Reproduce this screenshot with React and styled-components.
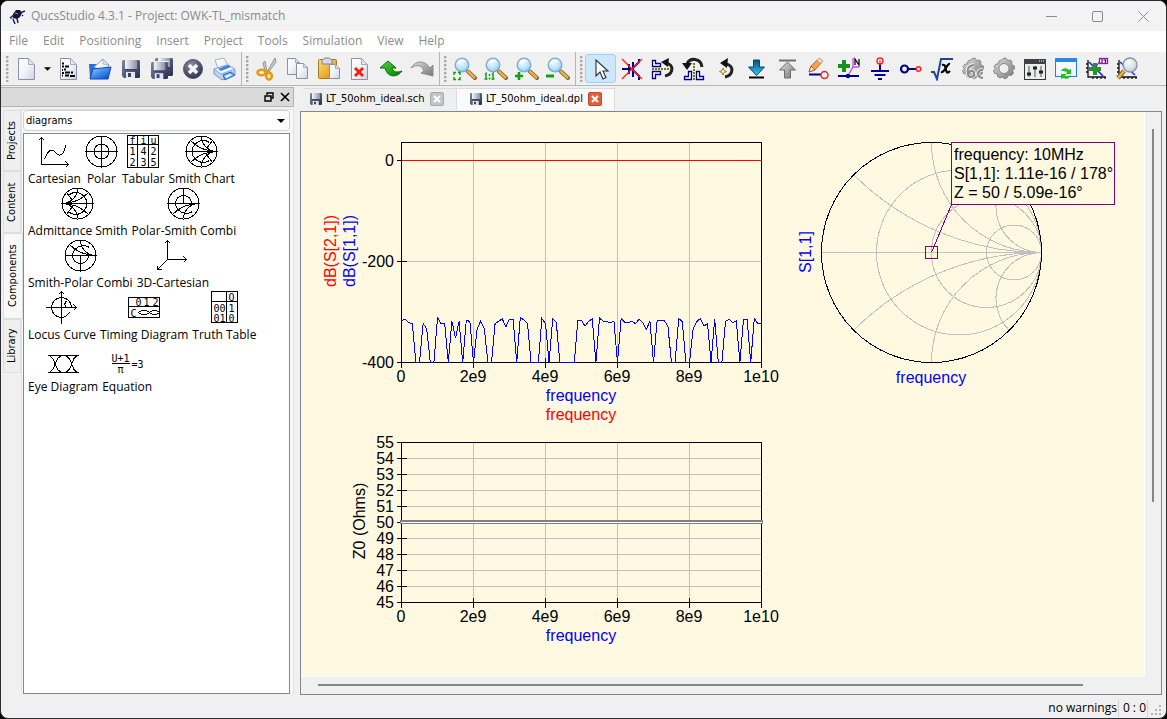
import React from "react";
import styled, { createGlobalStyle, css } from "styled-components";

const UI = `"Open Sans", "Noto Sans", sans-serif`;
const SMALL_UI = `"DejaVu Sans Condensed", "DejaVu Sans", sans-serif`;
const PLOT = `"Liberation Sans", Arial, sans-serif`;

const Global = createGlobalStyle`
  * { box-sizing: border-box; }
  html, body { margin: 0; height: 100%; background: #000; }
  body { font: 12px/16px ${UI}; color: #000; }
  #root { height: 100%; }
  button { font: inherit; color: inherit; background: none; border: 0; padding: 0; margin: 0; }
  svg { display: block; flex: none; }
`;

/* ---------- window shell ---------- */

const Window = styled.div`
  display: flex;
  flex-direction: column;
  height: 100vh;
  background: #f0f0f0;
  border: 1px solid #2b2b33;
  border-radius: 8px;
  overflow: hidden;
`;

const TitleBar = styled.header`
  display: flex;
  align-items: center;
  height: 30px;
  flex: none;
  padding-left: 8px;
  background: #f3f3f3;
  color: #8a8a8a;
`;

const Title = styled.h1`
  flex: 1;
  margin: 0 0 0 5px;
  font-size: 12px;
  font-weight: 400;
`;

const WindowButton = styled.button`
  display: grid;
  place-items: center;
  width: 46px;
  height: 30px;
`;

const MenuBar = styled.nav`
  display: flex;
  flex: none;
  height: 21px;
  background: #fff;
  color: #8c8c8c;
`;

const MenuItem = styled.button`
  height: 19px;
  padding: 0 7px 0 8px;
`;

const ToolBar = styled.div`
  display: flex;
  flex: none;
  height: 34px;
  padding-left: 1px;
  border-bottom: 1px solid #b6b6b6;
`;

const ToolGroup = styled.div`
  display: flex;
  align-items: center;
  padding-right: 2px;
  border-right: 1px solid ${(p) => (p.$last ? "transparent" : "#b6b6b6")};
`;

const Grip = styled.span`
  width: 9px;
  height: 26px;
  background: radial-gradient(circle at 1px 1px, #a8a8a8 1px, transparent 2px) 4px 0 / 5px 4px repeat-y;
`;

const ToolButton = styled.button`
  display: grid;
  place-items: center;
  width: ${(p) => (p.$narrow ? "11px" : "31px")};
  height: 29px;
  border: 1px solid transparent;
  border-radius: 3px;
  ${(p) =>
    p.$active &&
    css`
      background: #cce8ff;
      border-color: #99d1ff;
    `}
`;

const Body = styled.div`
  display: flex;
  flex: 1;
  min-height: 0;
`;

/* ---------- left dock ---------- */

const Dock = styled.aside`
  display: flex;
  flex-direction: column;
  flex: none;
  width: 293px;
`;

const DockTitle = styled.div`
  display: flex;
  justify-content: flex-end;
  align-items: center;
  gap: 6px;
  height: 20px;
  margin-top: 1px;
  padding-right: 3px;
  background: #dadada;
  border: 1px solid #b4b4b4;
  border-left: 0;
`;

const DockBody = styled.div`
  display: flex;
  flex: 1;
  min-height: 0;
  padding: 2px 0 1px 2px;
`;

const SideTabs = styled.div`
  display: flex;
  flex-direction: column;
  width: 18px;
  padding-top: 1px;
`;

const SideTab = styled.button`
  writing-mode: vertical-rl;
  transform: rotate(180deg);
  height: ${(p) => p.$height}px;
  width: ${(p) => (p.$selected ? "20px" : "18px")};
  padding: 0;
  font: 11px/16px ${SMALL_UI};
  text-align: center;
  background: ${(p) => (p.$selected ? "#f8f8f8" : "#efefef")};
  border: 1px solid #dedede;
`;

const SidePane = styled.div`
  display: flex;
  flex-direction: column;
  flex: 1;
  gap: 2px;
  padding: 0 3px 0 1px;
  border: 1px solid #e2e2e2;
  border-bottom: 0;
  background: #f8f8f8;
`;

const ComboBox = styled.label`
  display: flex;
  align-items: center;
  height: 21px;
  padding-right: 4px;
  background: #fff;
  border: 1px solid #cfcfcf;
  border-radius: 4px;
`;

const Combo = styled.select`
  flex: 1;
  appearance: none;
  border: 0;
  outline: 0;
  padding: 0 2px;
  background: transparent;
  font: 11px/16px ${SMALL_UI};
  color: #000;
`;

const Palette = styled.div`
  display: flex;
  flex-wrap: wrap;
  align-content: flex-start;
  column-gap: 4px;
  flex: 1;
  padding: 1px 12px 0 4px;
  background: #fff;
  border: 1px solid #828790;
`;

const PaletteItem = styled.button`
  display: flex;
  flex-direction: column;
  align-items: center;
  gap: 3px;
  height: 52px;
  min-width: 33px;
  white-space: nowrap;
`;

/* ---------- documents ---------- */

const Documents = styled.main`
  display: flex;
  flex-direction: column;
  flex: 1;
  min-width: 0;
  margin: 2px 4px 0 6px;
`;

const DocTabs = styled.div`
  display: flex;
  height: 22px;
  flex: none;
  padding-left: 3px;
`;

const DocTab = styled.div`
  display: flex;
  align-items: center;
  width: ${(p) => (p.$selected ? "158px" : "154px")};
  padding: 0 12px 2px ${(p) => (p.$selected ? "13px" : "7px")};
  background: ${(p) => (p.$selected ? "#fafafa" : "#efefef")};
  border: solid #dcdcdc;
  border-width: 1px 1px 0 0;
`;

const DocTabLabel = styled.button`
  display: flex;
  align-items: center;
  gap: 4px;
  flex: 1;
  font: 11px/16px ${SMALL_UI};
  white-space: nowrap;
`;

const CloseTab = styled.button`
  display: grid;
  place-items: center;
  flex: none;
  width: 14px;
  height: 14px;
  border-radius: 2px;
  background: ${(p) => (p.$hot ? "#e0603c" : "#c4c4c4")};
  border: 1px solid ${(p) => (p.$hot ? "#c8482c" : "#a8a8a8")};
`;

const ViewFrame = styled.div`
  display: grid;
  grid-template: minmax(0, 1fr) 17px / minmax(0, 1fr) 16px;
  flex: 1;
  min-height: 0;
  margin-top: 1px;
  border: 1px solid #828790;
`;

const Canvas = styled.section`
  position: relative;
  overflow: hidden;
  background: #fff9e1;
  border: solid #fff;
  border-width: 0 1px 1px 0;
`;

const VTrack = styled.div`
  display: flex;
  flex-direction: column;
  align-items: center;
  padding: 17px 1px 0 0;
`;

const HTrack = styled.div`
  display: flex;
  align-items: center;
  padding: 0 0 2px 17px;
`;

const Thumb = styled.span`
  background: #868686;
  ${(p) => (p.$vertical ? "width: 2px; height: 68%;" : "height: 2px; width: 92.5%;")}
`;

const StatusBar = styled.footer`
  display: flex;
  flex: none;
  justify-content: flex-end;
  align-items: center;
  height: 23px;
  padding: 4px 2px 0 0;
`;

const StatusCell = styled.span`
  padding: 0 1px 1px 4px;
  border-right: 1px solid #d4d4d4;
`;

/* ---------- diagrams on the canvas ---------- */

const Diagram = styled.svg`
  position: absolute;
  left: ${(p) => p.$x}px;
  top: ${(p) => p.$y}px;
  overflow: visible;
  font: 16px ${PLOT};
`;

const MarkerNote = styled.div`
  position: absolute;
  left: ${(p) => p.$x}px;
  top: ${(p) => p.$y}px;
  padding: 2px 1px 2px 2px;
  border: 1px solid #800080;
  background: #fff9e1;
  font: 16px/19px ${PLOT};
  white-space: nowrap;
`;

const X_LABELS = ["0", "2e9", "4e9", "6e9", "8e9", "1e10"];

function Turned({ x, y, fill, children }) {
  return (
    <text transform={`translate(${x} ${y}) rotate(-90)`} textAnchor="middle" fill={fill}>
      {children}
    </text>
  );
}

/* Rectangular plot, 360 wide; its origin is the top left corner of the frame. */
function Cartesian({ x, y, height, ticks, children }) {
  return (
    <Diagram $x={x} $y={y} width="361" height={height + 1}>
      <g transform="translate(.5 .5)" fill="none" shapeRendering="crispEdges">
        {[72, 144, 216, 288].map((gx) => (
          <path key={gx} d={`M${gx} 0V${height}`} stroke="#c0c0c0" />
        ))}
        {ticks.map(([, ty]) => (
          <path key={ty} d={`M0 ${ty}H360`} stroke="#c0c0c0" />
        ))}
        <rect width="360" height={height} stroke="#000" />
        {ticks.map(([, ty]) => (
          <path key={ty} d={`M-5 ${ty}H${ty % height ? 5 : 0}`} stroke="#000" />
        ))}
        {X_LABELS.map((l, i) => (
          <path key={l} d={`M${i * 72} ${height - (i % 5 ? 5 : 0)}v${i % 5 ? 10 : 5}`} stroke="#000" />
        ))}
      </g>
      {ticks.map(([label, ty]) => (
        <text key={label} x="-7" y={ty + 6} textAnchor="end">{label}</text>
      ))}
      {X_LABELS.map((l, i) => (
        <text key={l} x={i * 72} y={height + 20} textAnchor="middle">{l}</text>
      ))}
      {children}
    </Diagram>
  );
}

/* Level of S[1,1] above -400 dB for every 100 MHz. */
const S11 = [
  83, 86, 79, 77, 0, 0, 77, 67, 0, 0, 89, 77, 77, 0, 82, 48, 82, 0, 84, 81, 0, 67, 82, 67, 0, 0,
  77, 82, 86, 71, 86, 86, 0, 89, 84, 77, 0, 0, 0, 87, 77, 0, 87, 79, 0, 0, 0, 0, 0, 84, 83, 72,
  82, 86, 0, 88, 82, 81, 79, 82, 0, 87, 80, 79, 82, 77, 86, 79, 65, 82, 0, 83, 83, 83, 72, 0, 0,
  87, 81, 0, 0, 67, 81, 87, 72, 77, 0, 86, 0, 0, 81, 86, 79, 82, 0, 86, 86, 0, 87, 77, 77,
];

function SParameterPlot() {
  const points = S11.map((v, i) => `${i * 3.6},${220 - v * 0.505}`).join(" ");
  return (
    <Cartesian x={100} y={30} height={220} ticks={[["0", 18], ["-200", 119], ["-400", 220]]}>
      <g transform="translate(.5 .5)" fill="none" shapeRendering="crispEdges">
        <path d="M0 18H360" stroke="#f00" />
        <polyline points={points} stroke="#00f" />
      </g>
      <Turned x={-65} y={109} fill="#f00">dB(S[2,1])</Turned>
      <Turned x={-46} y={109} fill="#00f">dB(S[1,1])</Turned>
      <text x="180" y="259" textAnchor="middle" fill="#00f">frequency</text>
      <text x="180" y="278" textAnchor="middle" fill="#f00">frequency</text>
    </Cartesian>
  );
}

function ImpedancePlot() {
  const ticks = Array.from({ length: 11 }, (_, i) => [String(55 - i), i * 16]);
  return (
    <Cartesian x={100} y={330} height={160} ticks={ticks}>
      <g shapeRendering="crispEdges">
        <rect x="-1" y="78" width="363" height="4" fill="#808080" />
        <rect x="0" y="80" width="361" height="1" fill="#fff" />
      </g>
      <Turned x={-36} y={79}>Z0 (Ohms)</Turned>
      <text x="180" y="199" textAnchor="middle" fill="#00f">frequency</text>
    </Cartesian>
  );
}

function SmithPlot() {
  return (
    <Diagram $x={520} $y={30} width="221" height="221">
      <g transform="translate(.5 .5)" fill="none" stroke="#c0c0c0" shapeRendering="crispEdges">
        <path d="M0 110H220" />
        <circle cx="137.5" cy="110" r="82.5" />
        <circle cx="165" cy="110" r="55" />
        <circle cx="192.5" cy="110" r="27.5" />
        <path d="M220 110A265.6 265.6 0 0 1 32.2 32.2M220 110A265.6 265.6 0 0 0 32.2 187.8" />
        <path d="M220 110A110 110 0 0 1 110 0M220 110A110 110 0 0 0 110 220" />
        <path d="M220 110A45.6 45.6 0 0 1 187.8 32.2M220 110A45.6 45.6 0 0 0 187.8 187.8" />
        <circle cx="110" cy="110" r="110" stroke="#000" />
        <path d="M104 104h12v12h-12zM110 110L130 62" stroke="#800080" />
      </g>
      <Turned x={-10} y={110} fill="#00f">S[1,1]</Turned>
      <text x="110" y="241" textAnchor="middle" fill="#00f">frequency</text>
    </Diagram>
  );
}

/* ---------- toolbar icons, 24 x 24 ---------- */

const DefsSvg = styled.svg`
  position: absolute;
`;

const Defs = () => (
  <DefsSvg width="0" height="0" aria-hidden="true">
    <defs>
      <linearGradient id="paper" x1="0" y1="0" x2="1" y2="1">
        <stop offset="0" stopColor="#fff" /><stop offset=".5" stopColor="#f2f3f8" /><stop offset="1" stopColor="#cdd1e2" />
      </linearGradient>
      <linearGradient id="steel" x1="0" y1="0" x2="1" y2="1">
        <stop offset="0" stopColor="#7f88a2" /><stop offset=".6" stopColor="#4a5272" /><stop offset="1" stopColor="#272d4a" />
      </linearGradient>
      <linearGradient id="shutter" x1="0" y1="0" x2="1" y2="0">
        <stop offset="0" stopColor="#f4f6fa" /><stop offset="1" stopColor="#8b93a8" />
      </linearGradient>
      <linearGradient id="blue" x1="0" y1="0" x2="1" y2="1">
        <stop offset="0" stopColor="#9fd2ff" /><stop offset=".5" stopColor="#3b8cf0" /><stop offset="1" stopColor="#0b3fb8" />
      </linearGradient>
      <linearGradient id="cyan" x1="0" y1="0" x2="0" y2="1">
        <stop offset="0" stopColor="#064a86" /><stop offset="1" stopColor="#38c8f4" />
      </linearGradient>
      <radialGradient id="lens" cx=".4" cy=".3" r=".8">
        <stop offset="0" stopColor="#f4fdff" /><stop offset=".6" stopColor="#b4e3fa" /><stop offset="1" stopColor="#7cbce8" />
      </radialGradient>
      <radialGradient id="greyLens" cx=".4" cy=".3" r=".8">
        <stop offset="0" stopColor="#fff" /><stop offset="1" stopColor="#b8c6d4" />
      </radialGradient>
      <linearGradient id="gold" x1="0" y1="0" x2="1" y2="1">
        <stop offset="0" stopColor="#ffdf70" /><stop offset="1" stopColor="#d88a10" />
      </linearGradient>
      <linearGradient id="green" x1="0" y1="0" x2="1" y2="1">
        <stop offset="0" stopColor="#4ade3c" /><stop offset="1" stopColor="#067808" />
      </linearGradient>
      <linearGradient id="grey" x1="0" y1="0" x2="1" y2="1">
        <stop offset="0" stopColor="#e0e0e0" /><stop offset="1" stopColor="#757575" />
      </linearGradient>
      <radialGradient id="ball" cx=".4" cy=".3" r=".8">
        <stop offset="0" stopColor="#8c90a6" /><stop offset="1" stopColor="#23263c" />
      </radialGradient>
    </defs>
  </DefsSvg>
);

const Icon = ({ size = 24, box = 24, children }) => (
  <svg width={size} height={size} viewBox={`0 0 ${box} ${box}`} fill="none" aria-hidden="true">{children}</svg>
);

const Page = ({ x = 3, y = 1, w = 17, h = 22, f = 6 }) => (
  <g stroke="#8b90a6" strokeWidth="1">
    <path d={`M${x + 0.5} ${y + 0.5}h${w - f - 1}l${f} ${f}v${h - f - 1}h${1 - w}z`} fill="url(#paper)" />
    <path d={`M${x + w - f - 0.5} ${y + 0.5}v${f}h${f}z`} fill="#e2e5f0" stroke="#a5aac0" />
  </g>
);

const Disk = ({ x = 3, y = 3, s = 18 }) => (
  <g transform={`translate(${x} ${y}) scale(${s / 18})`}>
    <path d="M1 0h16l1 1v16l-1 1H2l-2-2V1z" fill="url(#steel)" />
    <path d="M3 0h12v9H3z" fill="url(#shutter)" />
    <path d="M3 9h12v1H3z" fill="#353c5c" />
    <path d="M4 12h9v6H4z" fill="#e3e6ee" />
    <path d="M6 13h3v4H6z" fill="#39405e" />
  </g>
);

const Loupe = () => (
  <>
    <path d="M15 14.500l7 6.500" stroke="#7c5a24" strokeWidth="4" strokeLinecap="round" />
    <path d="M15 14.500l6.500 6" stroke="#eeb04c" strokeWidth="2.400" strokeLinecap="round" />
    <circle cx="9" cy="8" r="6.800" fill="url(#lens)" stroke="#7fa8d2" strokeWidth="1.300" />
    <path d="M5 7a4.500 4 0 0 1 7-2.500" stroke="#fff" strokeWidth="1.500" />
  </>
);

const Gear = ({ hub = true }) => (
  <>
    <path
      d="M11 1.500l3-.5 1.500 2.500 3-.5 1.500 2-.5 2.500 3 1.500v3l-2 1.500 1 2.500-2 2.500-3-.5-1 2.500-3 1.500-2-2-2.500 1-2.500-1.500v-2.500l-3-.5-1-3L3.500 12 2 9.500 4 7h2.500l.5-3L9.500 3z"
      fill="url(#grey)" stroke="#8a8a8a"
    />
    {hub && <circle cx="12" cy="11.500" r="5" fill="#f0f0f0" stroke="#8a8a8a" />}
  </>
);

const icons = {
  newFile: <Page />,
  textFile: (
    <>
      <Page />
      <path d="M5 6.500h2M5 9.500h2M8 9.500h4M5 13h1M7 12.500h2M5 16h2M8 15.500h5M14 15.500h2M5 18.500h1M8 18.500h4M13 19h5" stroke="#000" strokeWidth="1.800" />
    </>
  ),
  open: (
    <>
      <path d="M1 7h8l1 2v13H2z" fill="#2c6fd8" />
      <path d="M6 10L15 2l6 6-4 8z" fill="url(#paper)" stroke="#8d96b8" />
      <path d="M15 2v5l6 1z" fill="#dfe5f5" stroke="#8d96b8" strokeWidth=".6" />
      <path d="M5 12l18-2-3 12H2z" fill="url(#blue)" stroke="#1747ae" />
    </>
  ),
  save: <Disk />,
  saveAll: (
    <>
      <Disk x={5} y={1} s={18} />
      <path d="M0 4h19v1H0z" fill="#f0f0f0" />
      <Disk x={1} y={5} s={17} />
    </>
  ),
  close: (
    <>
      <circle cx="12" cy="12" r="9.500" fill="url(#ball)" stroke="#555a70" />
      <path d="M8 8l8 8M16 8l-8 8" stroke="#f4f4f8" strokeWidth="3.600" />
    </>
  ),
  print: (
    <>
      <path d="M3 3l9-2 5 9-10 4z" fill="url(#paper)" stroke="#9fb2d8" />
      <path d="M2 12l14-4 7 5v5L10 23l-8-6z" fill="#bcd4f8" stroke="#7d96c8" />
      <path d="M2 12l7 5 14-5-7-4z" fill="#f3f8ff" stroke="#8ba5d8" />
      <path d="M6 12l10-4 3 2-10 4z" fill="#3485ea" />
      <path d="M11 18l8-3 4 3-10 5z" fill="#69aef6" stroke="#2d68c8" />
      <path d="M13 19l5-2 2 1-6 3z" fill="#fff" />
    </>
  ),
  cut: (
    <>
      <path d="M12 15L20 1l1 4-8 11zM12 15L10 4l-2 2 2 8z" fill="#c6ced8" stroke="#77818f" strokeWidth=".8" />
      <ellipse cx="6.500" cy="15.500" rx="4" ry="2.800" stroke="#e59a10" strokeWidth="2.600" />
      <ellipse cx="14" cy="19" rx="2.800" ry="3.500" stroke="#e59a10" strokeWidth="2.600" />
      <path d="M9 14h4l2 3" stroke="#e59a10" strokeWidth="2.400" />
    </>
  ),
  copy: <><Page x={1} y={1} w={13} h={17} f={4} /><Page x={10} y={6} w={12} h={16} f={4} /></>,
  paste: (
    <>
      <rect x="1.500" y="2.500" width="18" height="19" rx="1" fill="url(#gold)" stroke="#a8771c" />
      <path d="M5 3l3-2h4l3 2v4H5z" fill="#d5d8e0" stroke="#80869a" />
      <Page x={12} y={7} w={11} h={15} f={4} />
    </>
  ),
  remove: (
    <>
      <Page />
      <path d="M7 11l8 8M15 11l-8 8" stroke="#ee2413" strokeWidth="3" />
    </>
  ),
  undo: <path d="M1 11l8-7 8 7h-4c1 4 5 5 10 3-4 6-14 8-17-3z" fill="url(#green)" stroke="#0a6a10" />,
  redo: <path d="M23 19V8l-3 3C15 3 6 3 1 11c6-4 11-3 13 3l-3 2z" fill="url(#grey)" stroke="#8a8a8a" />,
  zoomFit: <><Loupe /><path d="M1 18v-2.500h2M5 15.500h2V18M7 20v2.500H5M3 22.500H1V20" stroke="#0a9a0a" strokeWidth="1.400" /></>,
  zoomOne: (
    <><Loupe /><path d="M1 17.500l1-1V22M.5 22h3M8 17.500l1-1V22M7.500 22h3M5.500 17v2M5.500 20.500v2" stroke="#0a9a0a" strokeWidth="1.400" /></>
  ),
  zoomIn: <><Loupe /><path d="M4 15v8M0 19h8" stroke="#12a012" strokeWidth="2.600" /></>,
  zoomOut: <><Loupe /><path d="M0 19h8" stroke="#12a012" strokeWidth="3" /></>,
  pointer: <path d="M7 3v16l4-4 3 7 3-1.500-3-6.500h5z" fill="#fff" stroke="#303030" strokeWidth="1.100" />,
  deactivate: (
    <>
      <path d="M2 12h11M13 5v15M13 11l6-6v-3M13 13l6 6v4M9 7v10" stroke="#000090" strokeWidth="2" />
      <path d="M2 2l20 20M22 2L2 22" stroke="#f22" strokeWidth="1.400" />
    </>
  ),
  mirrorX: (
    <>
      <path d="M1.500 3.500h3v3h5v3h-8zM1.500 21.500v-7h8v3h-5v4z" fill="#fff" stroke="#000080" strokeWidth="1.300" />
      <path d="M1 12h17" stroke="#7c7c00" strokeWidth="2" strokeDasharray="2 1" />
      <path d="M14 19c9-2 9-12 1-13" stroke="#222" strokeWidth="3" /><path d="M10 5l8-4-1 9z" fill="#111" />
    </>
  ),
  mirrorY: (
    <>
      <path d="M6.500 14.500v5h-4v3h7v-8zM14.500 14.500h3v5h4v3h-7z" fill="#fff" stroke="#000080" strokeWidth="1.300" />
      <path d="M12 6v17" stroke="#7c7c00" strokeWidth="2" strokeDasharray="2 1" />
      <path d="M20 10C19 1 8 0 5 7" stroke="#222" strokeWidth="3" /><path d="M0 6h10l-5 7z" fill="#111" />
    </>
  ),
  rotate: (
    <>
      <path d="M12 20c9-2 9-12 1-13" stroke="#222" strokeWidth="3" /><path d="M7 6l8-5-1 10z" fill="#111" />
      <path d="M10 11l1 2.500L13.500 14.500 11 15.500 10 18l-1-2.500L6.500 14.500 9 13.500z" fill="#fff4b0" stroke="#8a6a10" strokeWidth=".8" />
    </>
  ),
  hierDown: <><path d="M9.500 3h6v7h5l-8 8.500-8-8.500h5z" fill="url(#cyan)" stroke="#044878" /><path d="M5 20.500h15" stroke="#000" strokeWidth="2.200" /></>,
  hierUp: <><path d="M12.500 5l8 8h-5v8h-6v-8h-5z" fill="url(#grey)" stroke="#6c6c6c" /><path d="M4 3.500h17" stroke="#707070" strokeWidth="2.200" /></>,
  wire: (
    <>
      <path d="M3 15l2-6L13 1l4 3-8 9z" fill="#f0a24c" stroke="#a8601c" strokeWidth=".8" />
      <path d="M3 15l2-6 4 4z" fill="#f5dcb4" stroke="#5a4020" strokeWidth=".6" />
      <path d="M13 1l4 3-2 2-4-3z" fill="#d8d8e8" />
      <path d="M3 17.500h12" stroke="#000090" strokeWidth="2" />
      <circle cx="18.500" cy="18" r="3.500" stroke="#f22" strokeWidth="1.500" />
    </>
  ),
  label: (
    <>
      <path d="M1 19h21" stroke="#000090" strokeWidth="2" /><circle cx="11" cy="19" r="2.200" fill="#000090" />
      <path d="M12 17l4-7h6M16 10V1" stroke="#c4e" strokeWidth="1.300" />
      <path d="M7 3v12M1 9h12" stroke="#1c901c" strokeWidth="4" />
      <path d="M18 8V2l4 6V2" stroke="#000" strokeWidth="1.200" />
    </>
  ),
  ground: (
    <>
      <path d="M12 6v8M3 14h18M6.500 18h11M10 22h4" stroke="#000090" strokeWidth="2" />
      <circle cx="12" cy="4" r="3" stroke="#f22" strokeWidth="1.400" /><path d="M12 3v5" stroke="#f22" />
    </>
  ),
  port: (
    <>
      <circle cx="5.500" cy="12" r="3.500" stroke="#000080" strokeWidth="2.200" /><path d="M9 12h9" stroke="#000080" strokeWidth="2.200" />
      <circle cx="19.500" cy="12" r="2.300" stroke="#f22" strokeWidth="1.500" />
    </>
  ),
  equation: (
    <>
      <path d="M1 15h3l3 7L11 2h12" stroke="#2440a0" strokeWidth="2" />
      <path d="M12 8c3-1 3 1 4 5s2 3 4 1M20 7c-3-1-5 9-9 8" stroke="#000" strokeWidth="2.200" />
    </>
  ),
  simulate: (
    <>
      <Gear hub={false} />
      <path d="M13 8c-6 1-7 4-6 9s7 3 6-1-5-2-5 1M22 13c-6-1-7 8 0 8" stroke="#f0f0f0" strokeWidth="4" />
      <path d="M13 8c-6 1-7 4-6 9s7 3 6-1-5-2-5 1M22 13c-6-1-7 8 0 8" stroke="#8c8c8c" strokeWidth="2.200" />
    </>
  ),
  optimize: <Gear />,
  tune: (
    <>
      <rect x="1.500" y="2.500" width="21" height="20" fill="#ececec" stroke="#34383c" />
      <path d="M1 2h22v5H1z" fill="#3c4246" /><path d="M16 4h1M18 4h1M20 4h1" stroke="#fff" strokeWidth="1.200" />
      <path d="M6 9v11M12 9v11M18 9v11" stroke="#555" /><path d="M4 17h4M10 11h4M16 15h4" stroke="#222" strokeWidth="3" />
    </>
  ),
  display: (
    <>
      <rect x="1.500" y="1.500" width="21" height="18" fill="#f4f9ff" stroke="#2c7ad8" /><path d="M1 1h22v4H1z" fill="#2c86ea" />
      <path d="M7 14c2-4 6-3 8-1l2-1v5h-5l1-2c-2-1-4-1-6-1zM17 18c-2 5-6 4-8 3l-2 1v-5h5l-1 2c2 1 4 0 6-1z" fill="#1fc21f" />
    </>
  ),
  addMarker: (
    <>
      <path d="M3 3v17h18M1 7h2M1 11h2M1 15h2M8 20v2M12 20v2M16 20v2M20 20v2" stroke="#111" strokeWidth="1.300" />
      <path d="M4 5l14 14" stroke="#22f" strokeWidth="1.700" />
      <path d="M10 6v12M4 12h12" stroke="#27962a" strokeWidth="4" /><path d="M11 10l3-5" stroke="#a0c" />
      <rect x="14.500" y="1.500" width="8" height="5" fill="#fff" stroke="#a0c" strokeWidth="1.300" /><path d="M17 2v4M18.500 3H21l-1 3" stroke="#000" />
    </>
  ),
  zoomPlot: (
    <>
      <path d="M3 3v17h18M1 7h2M1 11h2M1 15h2M8 20v2M12 20v2M16 20v2M20 20v2" stroke="#111" strokeWidth="1.300" />
      <path d="M4 5l15 13" stroke="#22f" strokeWidth="1.500" />
      <path d="M8 14l-6 7" stroke="#7c5a24" strokeWidth="4.400" /><path d="M8 14l-6 7" stroke="#eeb04c" strokeWidth="2.600" />
      <circle cx="14" cy="8" r="7" fill="url(#greyLens)" stroke="#8795a4" strokeWidth="1.300" />
    </>
  ),
};

const GROUPS = [
  [["newFile", "New"], ["menu", "New file types"], ["textFile", "New text"], ["open", "Open"], ["save", "Save"], ["saveAll", "Save all"], ["close", "Close"], ["print", "Print"]],
  [["cut", "Cut"], ["copy", "Copy"], ["paste", "Paste"], ["remove", "Delete"], ["undo", "Undo"], ["redo", "Redo"]],
  [["zoomFit", "View all"], ["zoomOne", "View 1:1"], ["zoomIn", "Zoom in"], ["zoomOut", "Zoom out"]],
  [
    ["pointer", "Select"], ["deactivate", "Deactivate"], ["mirrorX", "Mirror about X axis"], ["mirrorY", "Mirror about Y axis"],
    ["rotate", "Rotate"], ["hierDown", "Go into subcircuit"], ["hierUp", "Pop out"], ["wire", "Wire"], ["label", "Wire label"],
    ["ground", "Ground"], ["port", "Port"], ["equation", "Equation"], ["simulate", "Simulate"], ["optimize", "Optimize"],
    ["tune", "Tune"], ["display", "View data display"], ["addMarker", "Set marker"], ["zoomPlot", "Zoom diagram"],
  ],
];

/* ---------- palette icons, 33 x 33 ---------- */

const Line = ({ children }) => (
  <svg width="33" height="33" viewBox="0 0 33 33" fill="none" stroke="#000" shapeRendering="crispEdges" aria-hidden="true">
    <g transform="translate(.5 .5)">{children}</g>
  </svg>
);

const Glyphs = styled.text`
  font: 10px "DejaVu Sans Mono", monospace;
  fill: #000;
  stroke: none;
`;

const Rim = () => <circle cx="16" cy="16" r="15.500" />;

const SmithGrid = () => (
  <>
    <Rim />
    <path d="M0 16h32" />
    <path d="M31 16A15.500 15.500 0 0 1 16 1M31 16A15.500 15.500 0 0 0 16 31" />
    <path d="M31 16A37 37 0 0 1 5 5M31 16A37 37 0 0 0 5 27" />
    <path d="M24 7A11 11 0 1 0 24 25" />
    <path d="M21 13l6-8M21 19l6 8" />
  </>
);

const palette = [
  ["Cartesian", <Line><path d="M3 2v27h27M0 5l3-3 3 3M27 26l3 3-3 3M6 24c4-10 7-12 12-6 4 4 8 0 9-8" /></Line>],
  ["Polar", <Line><Rim /><circle cx="16" cy="16" r="7.500" /><path d="M0 16h32M16 0v32" /></Line>],
  [
    "Tabular",
    <Line>
      <path d="M0 0h31v32H0zM10 0v32M21 0v32M0 9h31" />
      <Glyphs x="2" y="8">f</Glyphs><Glyphs x="13" y="8">i</Glyphs><Glyphs x="23" y="8">u</Glyphs>
      <Glyphs x="2" y="19">1</Glyphs><Glyphs x="13" y="19">4</Glyphs><Glyphs x="23" y="19">2</Glyphs>
      <Glyphs x="2" y="30">2</Glyphs><Glyphs x="13" y="30">3</Glyphs><Glyphs x="23" y="30">5</Glyphs>
    </Line>,
  ],
  ["Smith Chart", <Line><SmithGrid /></Line>],
  ["Admittance Smith", <Line><g transform="matrix(-1 0 0 1 32 0)"><SmithGrid /></g></Line>],
  ["Polar-Smith Combi", <Line><Rim /><path d="M0 16h32M16 0v16M8 16a8 8 0 0 1 16 0M8 16A11 11 0 0 0 25 24M31 16A15.500 15.500 0 0 0 16 31M31 16A37 37 0 0 0 5 27" /></Line>],
  ["Smith-Polar Combi", <Line><Rim /><path d="M0 16h32M16 16v16M8 16a8 8 0 0 0 16 0M8 16A11 11 0 0 1 25 8M31 16A15.500 15.500 0 0 1 16 1M31 16A37 37 0 0 1 5 5" /></Line>],
  ["3D-Cartesian", <Line><path d="M11 1v19h19M11 20L1 30M8 4l3-3 3 3M27 17l3 3-3 3M1 26v4h4" /></Line>],
  ["Locus Curve", <Line><path d="M0 16h31M16 0v32M13 3l3-3 3 3M28 13l3 3-3 3M26 16A10 10 0 1 0 16 26C22 26 22 22 25 20M22 9c-4 2-3 7 0 7" /></Line>],
  [
    "Timing Diagram",
    <Line>
      <path d="M0 6h31v20H0zM0 15h31M10 21l3-2h5l3 2 3-2h4l3 2M10 21l3 2h5l3-2 3 2h4l3-2" />
      <Glyphs x="7" y="14">0</Glyphs><Glyphs x="15" y="14">1</Glyphs><Glyphs x="24" y="14">2</Glyphs><Glyphs x="2" y="25">C</Glyphs>
    </Line>,
  ],
  [
    "Truth Table",
    <Line>
      <path d="M3 0h26v31H3zM18 0v31M3 10h26" />
      <Glyphs x="20" y="9">Q</Glyphs><Glyphs x="5" y="20">00</Glyphs><Glyphs x="20" y="20">1</Glyphs>
      <Glyphs x="5" y="30">01</Glyphs><Glyphs x="20" y="30">0</Glyphs>
    </Line>,
  ],
  ["Eye Diagram", <Line><path d="M0 12h31M0 29h31M0 12c9 0 6 17 16 17s7-17 15-17M0 29c9 0 6-17 16-17s7 17 15 17" /></Line>],
  [
    "Equation",
    <Line>
      <path d="M0 20h18" />
      <Glyphs x="0" y="18">U+1</Glyphs><Glyphs x="6" y="29">π</Glyphs><Glyphs x="20" y="24">=3</Glyphs>
    </Line>,
  ],
];

/* ---------- parts ---------- */

const Triangle = ({ w = 8 }) => (
  <svg width={w} height="4" viewBox="0 0 8 4" aria-hidden="true"><path d="M0 0h8L4 4z" fill="#000" /></svg>
);

function DocumentTab({ name, selected }) {
  return (
    <DocTab $selected={selected}>
      <DocTabLabel><Icon size={12} box={18}><Disk x={0} y={0} /></Icon>{name}</DocTabLabel>
      <CloseTab $hot={selected} aria-label={`Close ${name}`}>
        <svg width="8" height="8" viewBox="0 0 8 8" aria-hidden="true"><path d="M1 1l6 6M7 1L1 7" stroke="#fff" strokeWidth="2" /></svg>
      </CloseTab>
    </DocTab>
  );
}

export default function App() {
  return (
    <>
      <Global />
      <Defs />
      <Window>
        <TitleBar>
          <Icon size={17} box={17}>
            <path d="M4 6l3-4h4l2 3-2 4-3 2-4-1z" fill="#15153c" />
            <path d="M1 10l5-4M8 10l1 5M4 11l2 5M11 5l5-2M13 7l1 1" stroke="#232358" strokeWidth="1.500" />
            <path d="M1 11l3-1M6 5l3 1" stroke="#8090d0" />
          </Icon>
          <Title>QucsStudio 4.3.1 - Project: OWK-TL_mismatch</Title>
          <WindowButton aria-label="Minimize"><Icon size={11} box={11}><path d="M0 5.500h11" stroke="#8a8a8a" /></Icon></WindowButton>
          <WindowButton aria-label="Maximize"><Icon size={11} box={11}><rect x=".5" y=".5" width="10" height="10" rx="1.500" stroke="#8a8a8a" /></Icon></WindowButton>
          <WindowButton aria-label="Close"><Icon size={11} box={11}><path d="M.5.5l10 10M10.500.5l-10 10" stroke="#8a8a8a" /></Icon></WindowButton>
        </TitleBar>
        <MenuBar>
          {["File", "Edit", "Positioning", "Insert", "Project", "Tools", "Simulation", "View", "Help"].map((m) => (
            <MenuItem key={m}>{m}</MenuItem>
          ))}
        </MenuBar>
        <ToolBar>
          {GROUPS.map((group, i) => (
            <ToolGroup key={i} $last={i === 3}>
              <Grip />
              {group.map(([id, name]) => (
                <ToolButton key={id} aria-label={name} $active={id === "pointer"} $narrow={id === "menu"}>
                  {id === "menu" ? <Triangle w={7} /> : <Icon>{icons[id]}</Icon>}
                </ToolButton>
              ))}
            </ToolGroup>
          ))}
        </ToolBar>
        <Body>
          <Dock>
            <DockTitle>
              <button aria-label="Float"><Icon size={10} box={10}><path d="M3 3V1h6v5H7M1 4h6v5H1z" stroke="#000" strokeWidth="1.400" /></Icon></button>
              <button aria-label="Close panel"><Icon size={10} box={10}><path d="M1 1l8 8M9 1L1 9" stroke="#000" strokeWidth="1.700" /></Icon></button>
            </DockTitle>
            <DockBody>
              <SideTabs>
                <SideTab $height={61}>Projects</SideTab>
                <SideTab $height={62}>Content</SideTab>
                <SideTab $height={86} $selected>Components</SideTab>
                <SideTab $height={54}>Library</SideTab>
              </SideTabs>
              <SidePane>
                <ComboBox>
                  <Combo aria-label="Component category"><option>diagrams</option></Combo>
                  <Triangle />
                </ComboBox>
                <Palette>
                  {palette.map(([name, icon]) => (
                    <PaletteItem key={name}>{icon}{name}</PaletteItem>
                  ))}
                </Palette>
              </SidePane>
            </DockBody>
          </Dock>
          <Documents>
            <DocTabs>
              <DocumentTab name="LT_50ohm_ideal.sch" />
              <DocumentTab name="LT_50ohm_ideal.dpl" selected />
            </DocTabs>
            <ViewFrame>
              <Canvas>
                <SParameterPlot />
                <ImpedancePlot />
                <SmithPlot />
                <MarkerNote $x={650} $y={30}>
                  frequency: 10MHz<br />S[1,1]: 1.11e-16 / 178°<br />Z = 50 / 5.09e-16°
                </MarkerNote>
              </Canvas>
              <VTrack><Thumb $vertical /></VTrack>
              <HTrack><Thumb /></HTrack>
            </ViewFrame>
          </Documents>
        </Body>
        <StatusBar>
          <StatusCell>no warnings</StatusCell>
          <StatusCell>0 : 0</StatusCell>
          <Icon size={16} box={16}><path d="M11 5h2M11 9h2M7 9h2M11 13h2M7 13h2M3 13h2" stroke="#b4b4b4" strokeWidth="2" /></Icon>
        </StatusBar>
      </Window>
    </>
  );
}
